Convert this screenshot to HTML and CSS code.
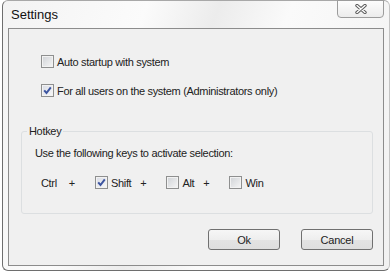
FILE: index.html
```html
<!DOCTYPE html>
<html>
<head>
    <meta charset="UTF-8">
    <title>Settings</title>
    <link rel="stylesheet" href="styles.css">
</head>
<body>
    <div class="window">
        <div class="titlebar">
            <span class="title">Settings</span>
            <button class="close-btn">
                <svg width="12" height="10" viewBox="0 0 12 10">
                    <path d="M2 1.5 L10 8.5 M10 1.5 L2 8.5" stroke="#5a5a5a" stroke-width="3.4" stroke-linecap="round"/>
                    <path d="M2 1.5 L10 8.5 M10 1.5 L2 8.5" stroke="#ffffff" stroke-width="1.4" stroke-linecap="round"/>
                </svg>
            </button>
        </div>
        <div class="client">
            <div class="options">
                <label class="check-row">
                    <span class="box"></span>
                    <span class="label">Auto startup with system</span>
                </label>
                <label class="check-row">
                    <span class="box checked">
                        <svg width="11" height="11" viewBox="0 0 11 11"><path d="M2.2 5.4 L4.5 8 L8.8 2.4" fill="none" stroke="#3c55a0" stroke-width="2"/></svg>
                    </span>
                    <span class="label">For all users on the system (Administrators only)</span>
                </label>
            </div>

            <fieldset class="group">
                <legend>Hotkey</legend>
                <div class="group-text">Use the following keys to activate selection:</div>
                <div class="keys">
                    <span class="key-name">Ctrl</span>
                    <span class="plus">+</span>
                    <label class="check-row">
                        <span class="box checked">
                            <svg width="11" height="11" viewBox="0 0 11 11"><path d="M2.2 5.4 L4.5 8 L8.8 2.4" fill="none" stroke="#3c55a0" stroke-width="2"/></svg>
                        </span>
                        <span class="label">Shift</span>
                    </label>
                    <span class="plus">+</span>
                    <label class="check-row">
                        <span class="box"></span>
                        <span class="label">Alt</span>
                    </label>
                    <span class="plus">+</span>
                    <label class="check-row">
                        <span class="box"></span>
                        <span class="label">Win</span>
                    </label>
                </div>
            </fieldset>

            <div class="buttons">
                <button class="btn">Ok</button>
                <button class="btn">Cancel</button>
            </div>
        </div>
    </div>
</body>
</html>
```

FILE: styles.css
```css
body {
    margin: 0;
    padding: 0;
    background-color: #ffffff;
    font-family: "Liberation Sans", Arial, sans-serif;
    font-size: 11px;
    letter-spacing: -0.32px;
    color: #222;
}
.window {
    margin-left: 2px;
    width: 386px;
    height: 269px;
    border: 1px solid #6e6e6e;
    border-top-color: #a8a8a8;
    border-right-color: #c4c4c4;
    border-radius: 6px;
    background: linear-gradient(110deg, #f3f3f3 0%, #fbfbfb 30%, #ececec 45%, #fafafa 60%, #f1f1f1 100%);
    display: flex;
    flex-direction: column;
}
.titlebar {
    height: 27px;
    display: flex;
    justify-content: space-between;
    align-items: flex-start;
    padding-right: 5px;
}
.title {
    font-size: 13px;
    letter-spacing: 0;
    color: #111;
    padding: 6px 0 0 8px;
}
.close-btn {
    width: 47px;
    height: 18px;
    padding: 0;
    margin-top: -1px;
    border: 1px solid #9c9c9c;
    border-radius: 0 0 4px 4px;
    background: linear-gradient(#fdfdfd, #ececec);
    display: flex;
    align-items: center;
    justify-content: center;
}
.client {
    margin: 0 5px 0 5px;
    height: 236px;
    border: 1px solid #8c8c8c;
    background-color: #f0f0f0;
    display: flex;
    flex-direction: column;
}
.options {
    padding: 25px 0 0 32px;
    display: flex;
    flex-direction: column;
    gap: 14px;
}
.check-row {
    display: flex;
    align-items: center;
    height: 15px;
}
.box {
    width: 11px;
    height: 11px;
    border: 1px solid #8e8f8f;
    background: linear-gradient(135deg, #cfd2d6, #f6f6f6);
    box-shadow: inset 0 0 0 1px #f2f2f2;
    display: flex;
    align-items: center;
    justify-content: center;
    flex-shrink: 0;
}
.box.checked {
    background: linear-gradient(135deg, #d9dce6, #f8f8f8);
}
.label {
    margin-left: 3px;
    white-space: nowrap;
}
.group {
    margin: 26px 10px 0 12px;
    padding: 8px 0 23px 5px;
    border: 1px solid #dcdfe1;
    border-radius: 3px;
    min-width: 0;
}
.group legend {
    padding: 0 2px;
    line-height: 14px;
}
.group-text {
    margin-left: 8px;
    height: 15px;
    line-height: 15px;
}
.keys {
    margin: 14px 0 0 14px;
    display: flex;
    align-items: center;
    height: 15px;
}
.key-name {
    margin-right: 12px;
}
.plus {
    margin-right: 20px;
}
.check-row + .plus {
    margin-left: 9px;
}
.buttons {
    margin-top: 15px;
    padding-right: 10px;
    display: flex;
    justify-content: flex-end;
    gap: 21px;
}
.btn {
    width: 72px;
    height: 21px;
    padding: 0;
    border: 1px solid #707070;
    border-radius: 3px;
    background: linear-gradient(#f6f6f6 0%, #eeeeee 50%, #e3e3e3 51%, #dedede 100%);
    font-family: "Liberation Sans", Arial, sans-serif;
    font-size: 11px;
    letter-spacing: -0.2px;
    color: #222;
}
```
